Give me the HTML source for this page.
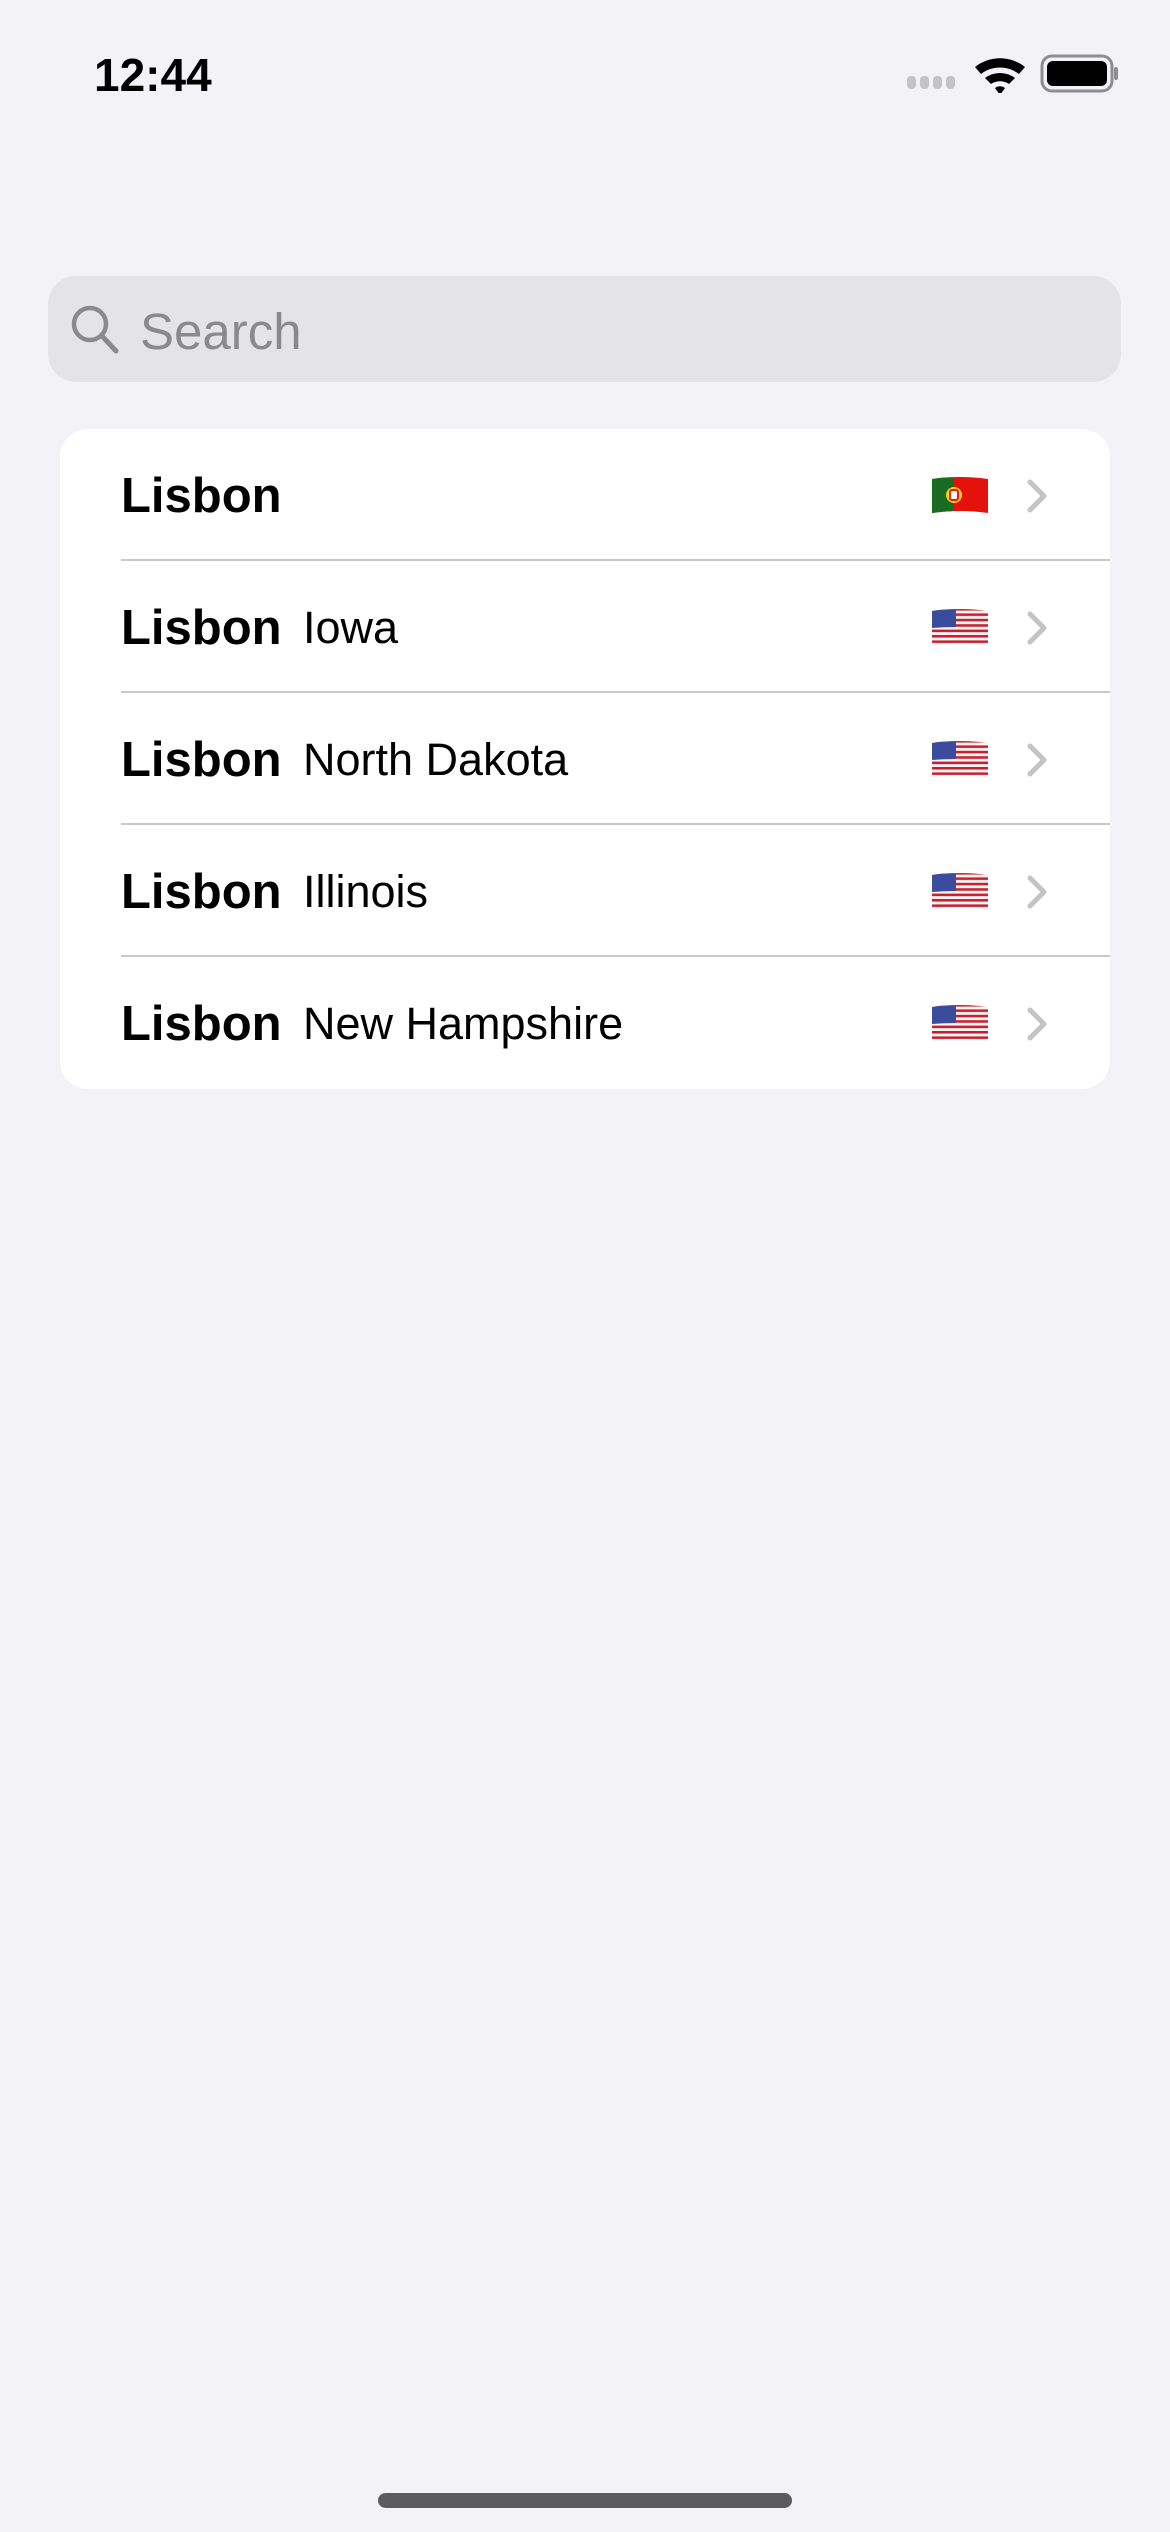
<!DOCTYPE html>
<html><head><meta charset="utf-8"><style>
*{margin:0;padding:0;box-sizing:border-box}
body{width:1170px;height:2532px;background:#f2f2f7;font-family:"Liberation Sans",sans-serif;position:relative;overflow:hidden}
.time{position:absolute;left:94px;top:48px;font-size:46px;font-weight:bold;letter-spacing:0px;color:#000}
.search{position:absolute;left:48px;top:276px;width:1073px;height:106px;background:#e3e3e8;border-radius:28px}
.search span{position:absolute;left:92px;top:26px;font-size:51px;color:#8a8a8e}
.card{position:absolute;left:60px;top:429px;width:1050px;height:660px;background:#fff;border-radius:28px;overflow:hidden}
.row{position:absolute;left:0;width:1050px;height:132px}
.row .sep{position:absolute;left:61px;right:0;bottom:0;height:2px;background:#c9c9cd}
.row b{position:absolute;left:61px;top:39px;font-size:49px;font-weight:bold;color:#000}
.row i{position:absolute;left:243px;top:41px;font-size:45px;font-style:normal;color:#000}
.row svg.flag{position:absolute;left:871px;top:47px}
.row svg.chev{position:absolute;left:966px;top:49px}
.home{position:absolute;left:378px;top:2493px;width:414px;height:15px;border-radius:8px;background:#5c5c60}
</style></head><body>
<div class="time">12:44</div>
<svg style="position:absolute;left:905px;top:53px" width="215" height="40" viewBox="0 0 215 40">
<g fill="#c4c4c8"><rect x="2" y="23" width="9" height="13" rx="4"/><rect x="15" y="23" width="9" height="13" rx="4"/><rect x="28" y="23" width="9" height="13" rx="4"/><rect x="41" y="23" width="9" height="13" rx="4"/></g>
<g fill="#000"><path d="M70 14 A40 40 0 0 1 120 14 L114 21 A31 31 0 0 0 76 21Z"/><path d="M80 25 A25 25 0 0 1 110 25 L104 31 A16 16 0 0 0 86 31Z"/><path d="M90 35 A8 8 0 0 1 100 35 L95 42Z"/></g>
<rect x="137" y="3" width="70" height="35" rx="10" fill="none" stroke="#8e8e92" stroke-width="3"/>
<rect x="142" y="8" width="60" height="25" rx="6" fill="#000"/>
<rect x="209" y="14" width="4" height="13" rx="2" fill="#8e8e92"/>
</svg>
<div class="search">
<svg style="position:absolute;left:22px;top:28px" width="52" height="52" viewBox="0 0 52 52"><circle cx="20" cy="20" r="16" fill="none" stroke="#8a8a8e" stroke-width="4.5"/><path d="M32 32 L46 47" stroke="#8a8a8e" stroke-width="5" stroke-linecap="round"/></svg>
<span>Search</span></div>
<div class="card">
<div class="row" style="top:0"><b>Lisbon</b>
<svg class="flag" width="58" height="40" viewBox="0 0 58 40"><path d="M1 3 Q29 -1 57 3 V37 Q29 33 1 37Z" fill="#e3120b"/><path d="M1 3 Q12 1 23 1.5 V35 Q12 35.5 1 37Z" fill="#1a6b22"/><circle cx="23" cy="19" r="8" fill="#f5d10c"/><rect x="19" y="14" width="8" height="10" rx="2" fill="#fff" stroke="#d21" stroke-width="2"/></svg>
<svg class="chev" width="22" height="36" viewBox="0 0 22 36"><path d="M4 4 L18 18 L4 32" fill="none" stroke="#c4c4c7" stroke-width="5" stroke-linecap="round" stroke-linejoin="round"/></svg>
<div class="sep"></div></div>
<div class="row" style="top:132px"><b>Lisbon</b><i>Iowa</i>
<svg class="flag" width="58" height="40" viewBox="0 0 58 40"><defs><pattern id="st" width="58" height="5.4" patternUnits="userSpaceOnUse"><rect width="58" height="2.7" fill="#c8202f"/><rect y="2.7" width="58" height="2.7" fill="#f4f4f4"/></pattern></defs><path d="M1 3 Q29 -1 57 3 V37 Q29 33 1 37Z" fill="url(#st)"/><path d="M1 3 Q12 1 25 1.5 V19 Q12 19 1 20Z" fill="#3c4c9c"/></svg>
<svg class="chev" width="22" height="36" viewBox="0 0 22 36"><path d="M4 4 L18 18 L4 32" fill="none" stroke="#c4c4c7" stroke-width="5" stroke-linecap="round" stroke-linejoin="round"/></svg>
<div class="sep"></div></div>
<div class="row" style="top:264px"><b>Lisbon</b><i>North Dakota</i>
<svg class="flag" width="58" height="40" viewBox="0 0 58 40"><path d="M1 3 Q29 -1 57 3 V37 Q29 33 1 37Z" fill="url(#st)"/><path d="M1 3 Q12 1 25 1.5 V19 Q12 19 1 20Z" fill="#3c4c9c"/></svg>
<svg class="chev" width="22" height="36" viewBox="0 0 22 36"><path d="M4 4 L18 18 L4 32" fill="none" stroke="#c4c4c7" stroke-width="5" stroke-linecap="round" stroke-linejoin="round"/></svg>
<div class="sep"></div></div>
<div class="row" style="top:396px"><b>Lisbon</b><i>Illinois</i>
<svg class="flag" width="58" height="40" viewBox="0 0 58 40"><path d="M1 3 Q29 -1 57 3 V37 Q29 33 1 37Z" fill="url(#st)"/><path d="M1 3 Q12 1 25 1.5 V19 Q12 19 1 20Z" fill="#3c4c9c"/></svg>
<svg class="chev" width="22" height="36" viewBox="0 0 22 36"><path d="M4 4 L18 18 L4 32" fill="none" stroke="#c4c4c7" stroke-width="5" stroke-linecap="round" stroke-linejoin="round"/></svg>
<div class="sep"></div></div>
<div class="row" style="top:528px"><b>Lisbon</b><i>New Hampshire</i>
<svg class="flag" width="58" height="40" viewBox="0 0 58 40"><path d="M1 3 Q29 -1 57 3 V37 Q29 33 1 37Z" fill="url(#st)"/><path d="M1 3 Q12 1 25 1.5 V19 Q12 19 1 20Z" fill="#3c4c9c"/></svg>
<svg class="chev" width="22" height="36" viewBox="0 0 22 36"><path d="M4 4 L18 18 L4 32" fill="none" stroke="#c4c4c7" stroke-width="5" stroke-linecap="round" stroke-linejoin="round"/></svg>
</div>
</div>
<div class="home"></div>
</body></html>
